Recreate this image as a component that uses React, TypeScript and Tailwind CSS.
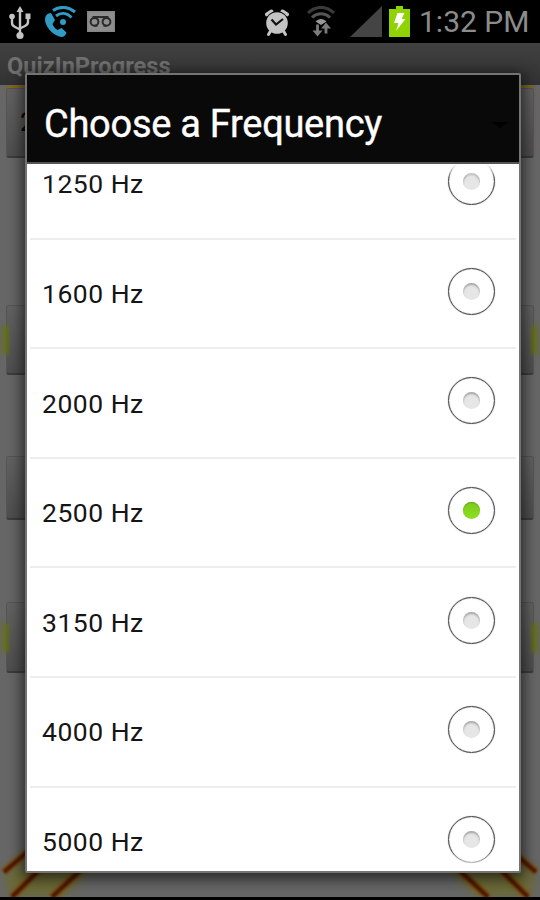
import { useState } from "react"
import clsx from "clsx"

const frequencies = [1250, 1600, 2000, 2500, 3150, 4000, 5000]

function UsbIcon() {
  return (
    <svg width="22" height="34" viewBox="0 0 22 34" fill="none" stroke="#c4c4c4" strokeWidth="2.4">
      <path d="M11 5v25M3 10v7c0 2 1 3 3 4l5 2.500M19 10v6c0 2-1 3-3 4l-5 2.500" />
      <g fill="#c4c4c4" stroke="none">
        <path d="M11 0l3.500 6h-7z" />
        <circle cx="3" cy="10.500" r="2.800" />
        <path d="M16.500 7.500h5v5.500h-5z" />
        <circle cx="11" cy="29.500" r="3.600" />
      </g>
    </svg>
  )
}

function WifiCallIcon() {
  return (
    <svg width="34" height="32" viewBox="0 0 34 32" fill="none">
      <path
        d="M4.500 7.500C.5 9.500.5 14 2 18c3 7 8.500 11.500 15 13 2.500.3 5-2 5.500-4.500l-5-4.500-4 2c-2-1-4.500-4-5-6l2.500-4-4-7z"
        fill="#2e9cc4"
      />
      <g stroke="#2e9cc4" strokeWidth="3">
        <path d="M9 4.500c7-5 16-3.500 22 1.500" />
        <path d="M12 10c5-4 11-3 15.500 1.500" />
      </g>
      <circle cx="19" cy="16" r="3" fill="#2e9cc4" />
    </svg>
  )
}

function VoicemailIcon() {
  return (
    <svg width="28" height="21" viewBox="0 0 28 21">
      <path d="M0 0h28v21H0z" fill="#858585" />
      <path d="M1.500 1.500h25v18h-25z" fill="#8f8f8f" />
      <g fill="none" stroke="#2b2b2b" strokeWidth="2">
        <circle cx="7.500" cy="10.800" r="3.900" />
        <circle cx="19.500" cy="10.800" r="3.900" />
        <path d="M5.500 6h16M7.500 14.700h3M16.500 14.700h3" />
      </g>
    </svg>
  )
}

function AlarmIcon() {
  return (
    <svg width="26" height="28" viewBox="0 0 26 28">
      <g fill="none" stroke="#c4c4c4" strokeLinecap="round">
        <path d="M3 5.500L7.500 2.500M23 5.500l-4.500-3" strokeWidth="4" />
      </g>
      <circle cx="13" cy="14" r="11.800" fill="#000" />
      <circle cx="13" cy="14" r="10.800" fill="#c4c4c4" />
      <path d="M6.500 22L4.500 25.500M19.500 22l2 3.500" stroke="#c4c4c4" strokeWidth="3" strokeLinecap="round" />
      <path d="M7.500 10.500l4.500 5 7-5.500" fill="none" stroke="#111" strokeWidth="2.200" />
    </svg>
  )
}

function WifiIcon() {
  return (
    <svg width="28" height="32" viewBox="0 0 28 32" fill="none">
      <path d="M1 7c8-7.500 18-7.500 26 0" stroke="#3a3a3a" strokeWidth="3" />
      <path d="M5 11.500c5.500-5 12.500-5 18 0" stroke="#555" strokeWidth="3" />
      <path d="M8.500 15.500c3.500-3.500 7.500-3.500 11 0L14 19z" fill="#999" />
      <path d="M10.500 18.500v8M19 27.500v-8" stroke="#7c7c7c" strokeWidth="2.800" />
      <path d="M5.500 24.500h10l-5 6zM14 22.500h10l-5-6z" fill="#7c7c7c" />
    </svg>
  )
}

function StatusBar() {
  return (
    <div className="flex h-[43px] items-start bg-black">
      <div className="flex pt-[6px] pl-[9px]">
        <UsbIcon />
        <div className="pl-[13px]">
          <WifiCallIcon />
        </div>
        <div className="pt-[5px] pl-[9px]">
          <VoicemailIcon />
        </div>
      </div>
      <div className="ml-auto flex pt-[6px] pr-[11px]">
        <div className="pt-[3px]">
          <AlarmIcon />
        </div>
        <div className="pl-[17px]">
          <WifiIcon />
        </div>
        <svg className="ml-[15px]" width="32" height="31" viewBox="0 0 32 31">
          <path d="M32 0v31H0z" fill="#444" />
        </svg>
        <svg className="ml-[7px]" width="21" height="31" viewBox="0 0 21 31">
          <path d="M7 0h7v3h7v28H0V3h7z" fill="#8fd400" />
          <path d="M8.500 7h7L12.500 13H16.500L7 25l2.500-8H5z" fill="#fff" />
        </svg>
        <span className="ml-[9px] w-[110px] text-[30px] leading-[32px] whitespace-nowrap text-[#8c8c8c]">
          1:32 PM
        </span>
      </div>
    </div>
  )
}

function Stripes() {
  return (
    <svg width="110" height="62" viewBox="0 0 110 62" fill="none">
      <g style={{ filter: "blur(5px)" }}>
        <path d="M4 40L26 24l66 8-28 30H10z" fill="#6b6a38" />
      </g>
      <g style={{ filter: "blur(1.500px)" }}>
        <path d="M4 37L32 13M12 62l28-28M52 62l32-30" stroke="#7a5214" strokeWidth="8" />
      </g>
      <g style={{ filter: "blur(0.800px)" }}>
        <path d="M4 37L32 13M12 62l28-28M52 62l32-30" stroke="#4d1600" strokeWidth="4" />
      </g>
    </svg>
  )
}

const quizButtons = [
  { id: "frequency", label: "2", className: "mt-[3px] h-[70px]", glow: false },
  { id: "play", label: "", className: "mt-[147px] h-[70px]", glow: true },
  { id: "volume", label: "", className: "mt-[81px] h-[64px]", glow: false },
  { id: "next", label: "", className: "mt-[82px] h-[71px]", glow: true },
]

function QuizScreen() {
  return (
    <div className="flex h-[857px] flex-col">
      <div className="h-[42px] bg-gradient-to-b from-[#414141] to-[#323232] pt-[9px] pl-[7px] text-[23.600px] leading-[28px] font-bold text-[#707070]">
        QuizInProgress
      </div>
      <div className="flex h-[812px] flex-col overflow-hidden bg-[#666]">
        {quizButtons.map((button) => (
          <div key={button.id} className={clsx("flex shrink-0 items-center", button.className)}>
            <span className={clsx("-mr-[2px] ml-[3px] h-[30px] w-[5px] rounded-full blur-[2px]", button.glow && "bg-[#65720a]")} />
            <div
              className={clsx(
                "flex h-full flex-1 items-center rounded-[3px] border border-b-2 border-[#555] border-b-[#3c3c3c] bg-gradient-to-b from-[#626262] to-[#4e4e4e] pl-[13px] text-[26px] text-black",
                button.id === "frequency" && "shadow-[0_-2px_1px_#8b650f]",
              )}
            >
              {button.label}
            </div>
            <span className={clsx("mr-[3px] -ml-[2px] h-[30px] w-[5px] rounded-full blur-[2px]", button.glow && "bg-[#65720a]")} />
          </div>
        ))}
        <div className="mt-auto flex justify-between">
          <Stripes />
          <div className="-scale-x-100">
            <Stripes />
          </div>
        </div>
      </div>
      <div className="h-[3px] bg-black" />
    </div>
  )
}

function Radio({ checked }: { checked: boolean }) {
  return (
    <span className="flex size-[47px] items-center justify-center rounded-full border-[1.500px] border-[#484848] shadow-[0_0_1px_#777,inset_0_0_1px_#777]">
      <span
        className={clsx(
          "size-[17px] rounded-full",
          checked
            ? "bg-gradient-to-b from-[#7ccc1c] to-[#8be01b] shadow-[inset_0_1px_1px_#64a51b]"
            : "bg-[#e6e6e6] shadow-[inset_0_2px_2px_#a8a8a8]",
        )}
      />
    </span>
  )
}

function FrequencyDialog() {
  const [selected, setSelected] = useState(2500)

  return (
    <div className="absolute top-[73px] left-[25px] flex h-[800px] w-[496px] flex-col rounded-[2px] border-2 border-[#747474] bg-white shadow-[0_3px_14px_3px_rgba(0,0,0,0.6)]">
      <div className="flex h-[89px] shrink-0 items-center border-b-2 border-[#555] bg-[#090909] pl-[17px]">
        <h2 className="pt-[10px] text-[38px] leading-[42px] font-normal tracking-[-0.280px] whitespace-nowrap text-white [-webkit-text-stroke:0.4px_white]">
          Choose a Frequency
        </h2>
        <span className="mt-[13px] mr-[11px] ml-auto border-x-[8px] border-t-[6px] border-x-transparent border-t-black" />
      </div>
      <div className="relative flex-1 overflow-hidden">
        <ul className="-mt-[34px] px-[3px]">
          {frequencies.map((hz) => (
            <li key={hz} className="h-[109.600px] border-b-2 border-[#ededed]">
              <button
                onClick={() => setSelected(hz)}
                className="flex h-full w-full items-center justify-between pr-[21px] pl-[12px] text-[26.500px] tracking-[0.500px] text-[#151515]"
              >
                <span className="pt-px">{hz} Hz</span>
                <span className="pb-[4px]">
                  <Radio checked={hz === selected} />
                </span>
              </button>
            </li>
          ))}
        </ul>
        {/* fading edges of the scrolling list */}
        <div className="pointer-events-none absolute inset-x-0 top-0 h-[14px] bg-gradient-to-b from-white to-transparent" />
        <div className="pointer-events-none absolute inset-x-0 bottom-0 h-[20px] bg-gradient-to-t from-white to-transparent" />
      </div>
    </div>
  )
}

export default function App() {
  return (
    <div className="relative h-[900px] w-[540px] overflow-hidden bg-black font-['Roboto',sans-serif]">
      <StatusBar />
      <QuizScreen />
      <FrequencyDialog />
    </div>
  )
}
